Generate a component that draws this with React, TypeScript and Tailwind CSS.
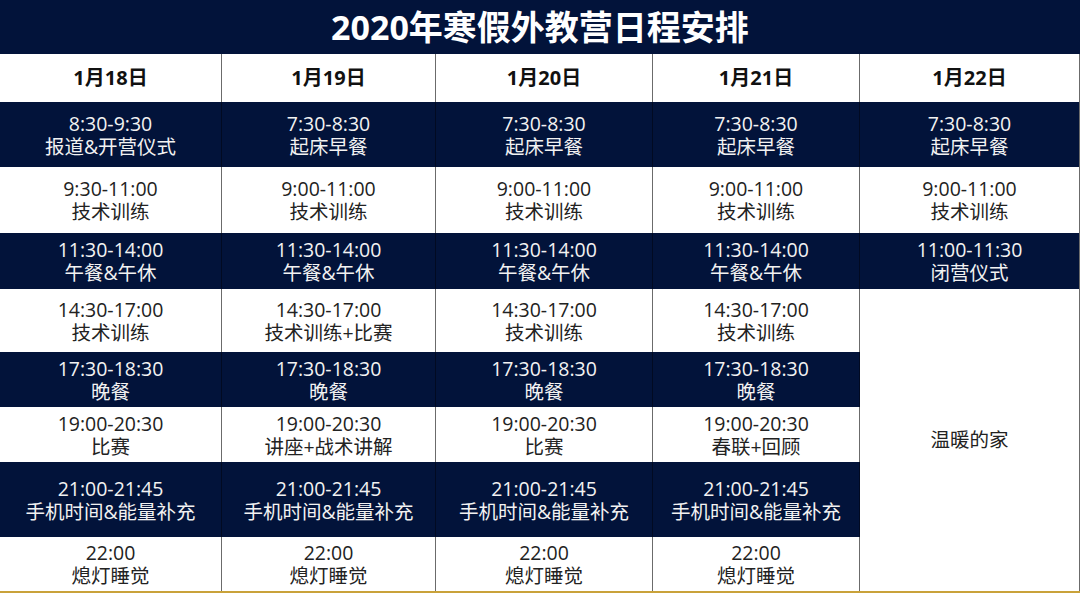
import React from "react";

type Cell = { t: string; l: string };

const days = ["1月18日", "1月19日", "1月20日", "1月21日", "1月22日"];

const rows: { dark: boolean; h: number; cells: Cell[] }[] = [
  {
    dark: true,
    h: 65,
    cells: [
      { t: "8:30-9:30", l: "报道&开营仪式" },
      { t: "7:30-8:30", l: "起床早餐" },
      { t: "7:30-8:30", l: "起床早餐" },
      { t: "7:30-8:30", l: "起床早餐" },
      { t: "7:30-8:30", l: "起床早餐" },
    ],
  },
  {
    dark: false,
    h: 66,
    cells: [
      { t: "9:30-11:00", l: "技术训练" },
      { t: "9:00-11:00", l: "技术训练" },
      { t: "9:00-11:00", l: "技术训练" },
      { t: "9:00-11:00", l: "技术训练" },
      { t: "9:00-11:00", l: "技术训练" },
    ],
  },
  {
    dark: true,
    h: 56,
    cells: [
      { t: "11:30-14:00", l: "午餐&午休" },
      { t: "11:30-14:00", l: "午餐&午休" },
      { t: "11:30-14:00", l: "午餐&午休" },
      { t: "11:30-14:00", l: "午餐&午休" },
      { t: "11:00-11:30", l: "闭营仪式" },
    ],
  },
  {
    dark: false,
    h: 63,
    cells: [
      { t: "14:30-17:00", l: "技术训练" },
      { t: "14:30-17:00", l: "技术训练+比赛" },
      { t: "14:30-17:00", l: "技术训练" },
      { t: "14:30-17:00", l: "技术训练" },
    ],
  },
  {
    dark: true,
    h: 55,
    cells: [
      { t: "17:30-18:30", l: "晚餐" },
      { t: "17:30-18:30", l: "晚餐" },
      { t: "17:30-18:30", l: "晚餐" },
      { t: "17:30-18:30", l: "晚餐" },
    ],
  },
  {
    dark: false,
    h: 55,
    cells: [
      { t: "19:00-20:30", l: "比赛" },
      { t: "19:00-20:30", l: "讲座+战术讲解" },
      { t: "19:00-20:30", l: "比赛" },
      { t: "19:00-20:30", l: "春联+回顾" },
    ],
  },
  {
    dark: true,
    h: 75,
    cells: [
      { t: "21:00-21:45", l: "手机时间&能量补充" },
      { t: "21:00-21:45", l: "手机时间&能量补充" },
      { t: "21:00-21:45", l: "手机时间&能量补充" },
      { t: "21:00-21:45", l: "手机时间&能量补充" },
    ],
  },
  {
    dark: false,
    h: 54,
    cells: [
      { t: "22:00", l: "熄灯睡觉" },
      { t: "22:00", l: "熄灯睡觉" },
      { t: "22:00", l: "熄灯睡觉" },
      { t: "22:00", l: "熄灯睡觉" },
    ],
  },
];

const font = { fontFamily: '"Open Sans", "Noto Sans CJK SC", sans-serif' };

export default function App() {
  const cells: React.ReactNode[] = [];
  rows.forEach((r, ri) => {
    r.cells.forEach((c, ci) => {
      cells.push(
        <div
          key={ri + "-" + ci}
          className={`flex flex-col items-center justify-center text-[19.5px] leading-[23px] ${
            r.dark ? "bg-[#02133a] text-[#f2f2f2]" : "bg-white text-[#222]"
          } ${ci < 4 ? (r.dark ? "border-r border-[#010a22]" : "border-r border-[#6b6b6b]") : ""}`}
        >
          <span>{c.t}</span>
          <span>{c.l}</span>
        </div>
      );
    });
    if (ri === 3) {
      cells.push(
        <div
          key="merged"
          className="row-span-5 col-start-5 row-start-5 flex items-center justify-center bg-white text-[19.5px] text-[#222]"
        >
          温暖的家
        </div>
      );
    }
  });

  return (
    <div className="w-[1080px] h-[593px] bg-white overflow-hidden flex flex-col" style={font}>
      <div className="h-[54px] bg-[#02133a] flex items-center justify-center text-white font-bold text-[34px]">
        2020年寒假外教营日程安排
      </div>
      <div
        className="grid grid-cols-[222px_214px_217px_207px_219px] border-r border-[#6b6b6b] w-[1080px]"
        style={{ gridTemplateRows: `48px ${rows.map((r) => r.h + "px").join(" ")}` }}
      >
        {days.map((d, i) => (
          <div
            key={d}
            className={`flex items-center justify-center font-bold text-[20px] text-[#111] bg-white ${
              i < 4 ? "border-r border-[#6b6b6b]" : ""
            }`}
          >
            {d}
          </div>
        ))}
        {cells}
      </div>
      <div className="h-[2px] bg-[#c9a23a]" />
    </div>
  );
}
